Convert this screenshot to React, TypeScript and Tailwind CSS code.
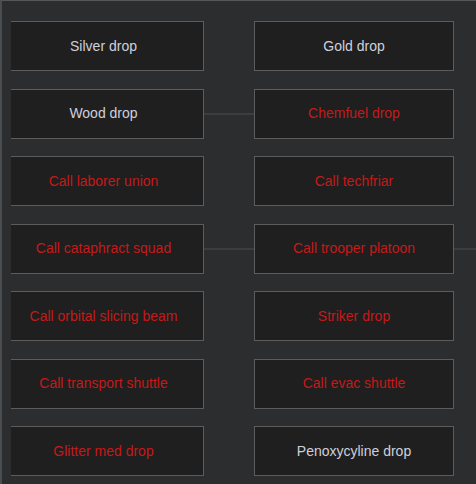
import React from "react";

type Item = { label: string; red: boolean };
type Row = { left: Item; right: Item; linkMid: boolean; linkOut: boolean };

const rows: Row[] = [
  { left: { label: "Silver drop", red: false }, right: { label: "Gold drop", red: false }, linkMid: false, linkOut: false },
  { left: { label: "Wood drop", red: false }, right: { label: "Chemfuel drop", red: true }, linkMid: true, linkOut: false },
  { left: { label: "Call laborer union", red: true }, right: { label: "Call techfriar", red: true }, linkMid: false, linkOut: false },
  { left: { label: "Call cataphract squad", red: true }, right: { label: "Call trooper platoon", red: true }, linkMid: true, linkOut: true },
  { left: { label: "Call orbital slicing beam", red: true }, right: { label: "Striker drop", red: true }, linkMid: false, linkOut: false },
  { left: { label: "Call transport shuttle", red: true }, right: { label: "Call evac shuttle", red: true }, linkMid: false, linkOut: false },
  { left: { label: "Glitter med drop", red: true }, right: { label: "Penoxycyline drop", red: false }, linkMid: false, linkOut: false },
];

function Box({ item, left }: { item: Item; left?: boolean }) {
  return (
    <div
      className={
        "h-[50px] flex items-center justify-center bg-[#1f1f1f] border border-[#5c5c5c] text-[14px] shrink-0 " +
        (left ? "w-[193px] border-l-0 pr-[7px]" : "w-[200px]") +
        " " +
        (item.red ? "text-[#c41a1a]" : "text-[#cfd0db]")
      }
    >
      <span className="whitespace-nowrap">{item.label}</span>
    </div>
  );
}

export default function App() {
  return (
    <div
      className="w-[476px] h-[484px] overflow-hidden bg-[#2b2d2f] border-t border-t-[#55585b] border-l-2 border-l-[#4a4d50] pl-[9px] pt-[20px] flex flex-col gap-[17.5px]"
      style={{ fontFamily: '"Liberation Sans", Arial, sans-serif' }}
    >
      {rows.map((r, i) => (
        <div key={i} className="flex items-center">
          <Box item={r.left} left />
          <div className={"w-[50px] h-[2px] shrink-0 " + (r.linkMid ? "bg-[#3b3d3f]" : "")} />
          <Box item={r.right} />
          <div className={"flex-1 h-[2px] " + (r.linkOut ? "bg-[#3b3d3f]" : "")} />
        </div>
      ))}
    </div>
  );
}
